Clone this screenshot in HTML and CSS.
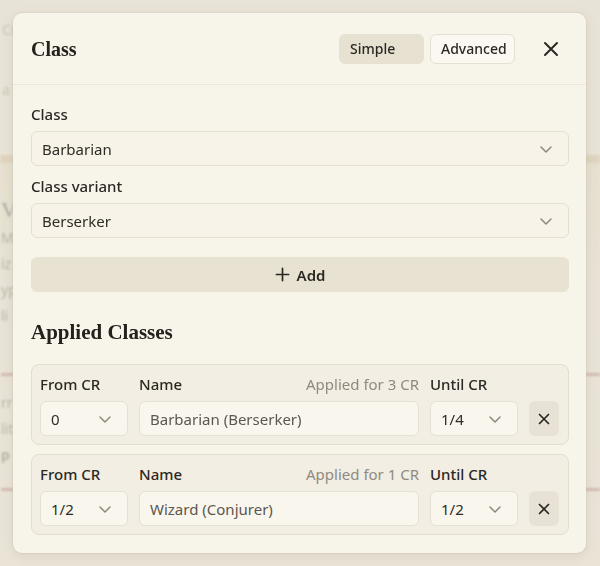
FILE: index.html
```html
<!DOCTYPE html>
<html>
<head>
<meta charset="utf-8">
<link rel="stylesheet" href="styles.css">
</head>
<body>
<div class="page">
  <div class="bg-top">
    <div class="bg-nav"><span>Cr</span><span>a</span></div>
  </div>
  <div class="bg-band"></div>
  <div class="bg-main">
    <div class="bg-title">V.</div>
    <div class="bg-line">Me</div>
    <div class="bg-line">iz</div>
    <div class="bg-line">yp</div>
    <div class="bg-line">li</div>
    <div class="bg-rule first"></div>
    <div class="bg-line">rr</div>
    <div class="bg-line">lit</div>
    <div class="bg-line bold">p</div>
    <div class="bg-rule"></div>
  </div>
</div>

<div class="overlay">
  <div class="modal">
    <div class="modal-header">
      <h2 class="modal-title">Class</h2>
      <div class="header-actions">
        <button class="mode-btn active">Simple</button>
        <button class="mode-btn">Advanced</button>
        <button class="close-btn" aria-label="Close">
          <svg width="16" height="16" viewBox="0 0 16 16"><path d="M2 2L14 14M14 2L2 14" stroke="#2b2824" stroke-width="2" stroke-linecap="round" fill="none"/></svg>
        </button>
      </div>
    </div>

    <div class="modal-body">
      <div class="field">
        <div class="label">Class</div>
        <div class="select">
          <span>Barbarian</span>
          <svg class="chev" width="16" height="16" viewBox="0 0 16 16"><path d="M3 6l5 5 5-5" stroke="#8d897f" stroke-width="1.5" fill="none" stroke-linecap="round" stroke-linejoin="round"/></svg>
        </div>
      </div>
      <div class="field">
        <div class="label">Class variant</div>
        <div class="select">
          <span>Berserker</span>
          <svg class="chev" width="16" height="16" viewBox="0 0 16 16"><path d="M3 6l5 5 5-5" stroke="#8d897f" stroke-width="1.5" fill="none" stroke-linecap="round" stroke-linejoin="round"/></svg>
        </div>
      </div>
      <button class="add-btn">
        <svg width="15" height="15" viewBox="0 0 16 16"><path d="M8 1.5v13M1.5 8h13" stroke="#2b2824" stroke-width="1.8" stroke-linecap="round" fill="none"/></svg>
        <span>Add</span>
      </button>

      <h3 class="section-title">Applied Classes</h3>

      <div class="rows">
        <div class="row-card">
          <div class="row-label">From CR</div>
          <div class="row-label name-label"><span>Name</span><span class="applied">Applied for 3 CR</span></div>
          <div class="row-label">Until CR</div>
          <div></div>
          <div class="mini-select"><span>0</span><svg width="16" height="16" viewBox="0 0 16 16"><path d="M3 6l5 5 5-5" stroke="#8d897f" stroke-width="1.5" fill="none" stroke-linecap="round" stroke-linejoin="round"/></svg></div>
          <div class="name-input">Barbarian (Berserker)</div>
          <div class="mini-select"><span>1/4</span><svg width="16" height="16" viewBox="0 0 16 16"><path d="M3 6l5 5 5-5" stroke="#8d897f" stroke-width="1.5" fill="none" stroke-linecap="round" stroke-linejoin="round"/></svg></div>
          <button class="remove-btn" aria-label="Remove"><svg width="12" height="12" viewBox="0 0 12 12"><path d="M1.5 1.5l9 9M10.5 1.5l-9 9" stroke="#2b2824" stroke-width="1.7" stroke-linecap="round" fill="none"/></svg></button>
        </div>
        <div class="row-card">
          <div class="row-label">From CR</div>
          <div class="row-label name-label"><span>Name</span><span class="applied">Applied for 1 CR</span></div>
          <div class="row-label">Until CR</div>
          <div></div>
          <div class="mini-select"><span>1/2</span><svg width="16" height="16" viewBox="0 0 16 16"><path d="M3 6l5 5 5-5" stroke="#8d897f" stroke-width="1.5" fill="none" stroke-linecap="round" stroke-linejoin="round"/></svg></div>
          <div class="name-input">Wizard (Conjurer)</div>
          <div class="mini-select"><span>1/2</span><svg width="16" height="16" viewBox="0 0 16 16"><path d="M3 6l5 5 5-5" stroke="#8d897f" stroke-width="1.5" fill="none" stroke-linecap="round" stroke-linejoin="round"/></svg></div>
          <button class="remove-btn" aria-label="Remove"><svg width="12" height="12" viewBox="0 0 12 12"><path d="M1.5 1.5l9 9M10.5 1.5l-9 9" stroke="#2b2824" stroke-width="1.7" stroke-linecap="round" fill="none"/></svg></button>
        </div>
      </div>
    </div>
  </div>
</div>
</body>
</html>
```

FILE: styles.css
```css
* { box-sizing: border-box; }

html, body {
  margin: 0;
  padding: 0;
  width: 600px;
  height: 566px;
  overflow: hidden;
}

body {
  font-family: "Noto Sans", "Open Sans", sans-serif;
  color: #2b2824;
  background: #e9e3d6;
}

/* blurred page behind the dialog */
.page {
  height: 566px;
  overflow: hidden;
  filter: blur(0.8px);
}
.bg-top {
  height: 155px;
  background: #e9e3d7;
  padding: 20px 0 0 2px;
}
.bg-nav {
  display: flex;
  flex-direction: column;
  gap: 40px;
  color: #bcb5a7;
  font-size: 14px;
  line-height: 20px;
}
.bg-band {
  height: 8px;
  background: #dacdb3;
}
.bg-main {
  height: 403px;
  background: linear-gradient(#e6dfcb, #e8e3d6 30%, #ebe5d8);
  padding: 32px 0 0 1px;
  color: #a39d90;
  font-size: 14px;
  line-height: 26px;
}
.bg-title {
  font-family: "Liberation Serif", serif;
  font-size: 22px;
  color: #8e8a80;
  line-height: 30px;
}
.bg-line.bold { font-weight: 700; }
.bg-rule {
  height: 3px;
  background: #c9a7a0;
  margin: 20px 0 0;
}
.bg-rule.first { margin: 44px 0 14px; }

/* overlay & modal */
.overlay {
  position: fixed;
  top: 0;
  left: 0;
  width: 600px;
  height: 566px;
  background: rgba(233, 227, 214, 0.35);
  padding: 13px 14px 0 13px;
}
.modal {
  width: 573px;
  height: 540px;
  background: #f7f4ea;
  border-radius: 9px;
  box-shadow: 0 3px 12px rgba(90, 80, 60, 0.12), 0 0 0 1px rgba(200, 192, 175, 0.25);
  display: flex;
  flex-direction: column;
}

.modal-header {
  flex: none;
  height: 72px;
  display: flex;
  align-items: center;
  justify-content: space-between;
  padding: 0 20px 0 18px;
  border-bottom: 1px solid #ece7db;
}
.modal-title {
  margin: 0;
  font-family: "Liberation Serif", "Times New Roman", serif;
  font-weight: 700;
  font-size: 20px;
  line-height: 28px;
  color: #24211d;
}
.header-actions {
  display: flex;
  align-items: center;
  gap: 6px;
}
.mode-btn {
  width: 85px;
  height: 30px;
  padding: 0 10px;
  text-align: left;
  font-family: "Noto Sans", sans-serif;
  font-size: 14px;
  font-weight: 500;
  color: #2b2824;
  border-radius: 6px;
  border: 1px solid #e6e0d2;
  background: #faf8f1;
  cursor: pointer;
}
.mode-btn.active {
  background: #e7e1d1;
  border-color: #e7e1d1;
}
.close-btn {
  width: 32px;
  height: 32px;
  margin-left: 14px;
  margin-right: -1px;
  border: none;
  background: transparent;
  display: flex;
  align-items: center;
  justify-content: center;
  padding: 0;
}

.modal-body {
  padding: 19px 17px 18px 18px;
  display: flex;
  flex-direction: column;
}
.field {
  display: flex;
  flex-direction: column;
  gap: 6px;
  margin-bottom: 10px;
}
.label {
  font-size: 15px;
  font-weight: 500;
  line-height: 21px;
  color: #2b2824;
}
.select {
  height: 35px;
  border: 1px solid #e4dfd1;
  border-radius: 6px;
  background: #f7f3e9;
  display: flex;
  align-items: center;
  justify-content: space-between;
  padding: 0 14px 0 10px;
  font-size: 15px;
  color: #2f2c27;
}
.chev { flex: none; }

.add-btn {
  margin-top: 9px;
  height: 35px;
  border: none;
  border-radius: 6px;
  background: #e8e2d2;
  display: flex;
  align-items: center;
  justify-content: center;
  gap: 7px;
  font-family: "Noto Sans", sans-serif;
  font-size: 15px;
  font-weight: 600;
  color: #2b2824;
}

.section-title {
  margin: 25px 0 17px;
  font-family: "Liberation Serif", "Times New Roman", serif;
  font-weight: 700;
  font-size: 21px;
  line-height: 30px;
  color: #24211d;
}

.rows {
  display: flex;
  flex-direction: column;
  gap: 9px;
}
.row-card {
  border: 1px solid #e3ddcf;
  border-radius: 8px;
  background: #f2eee3;
  padding: 9px 9px 8px 8px;
  display: grid;
  grid-template-columns: 88px 1fr 88px 30px;
  grid-template-rows: 20px 35px;
  column-gap: 11px;
  row-gap: 7px;
}
.row-label {
  font-size: 15px;
  font-weight: 500;
  line-height: 20px;
  color: #2b2824;
  white-space: nowrap;
}
.name-label {
  display: flex;
  justify-content: space-between;
}
.applied {
  font-weight: 400;
  color: #8f8a7f;
}
.mini-select {
  height: 35px;
  border: 1px solid #e6e1d4;
  border-radius: 6px;
  background: #f9f6ee;
  display: flex;
  align-items: center;
  justify-content: space-between;
  padding: 0 14px 0 10px;
  font-size: 15px;
  color: #2f2c27;
}
.name-input {
  height: 35px;
  border: 1px solid #e6e1d4;
  border-radius: 6px;
  background: #f9f6ee;
  display: flex;
  align-items: center;
  padding: 0 10px;
  font-size: 15px;
  color: #5b574f;
}
.remove-btn {
  width: 30px;
  height: 35px;
  border: none;
  border-radius: 6px;
  background: #e7e2d5;
  display: flex;
  align-items: center;
  justify-content: center;
  padding: 0;
}
```
